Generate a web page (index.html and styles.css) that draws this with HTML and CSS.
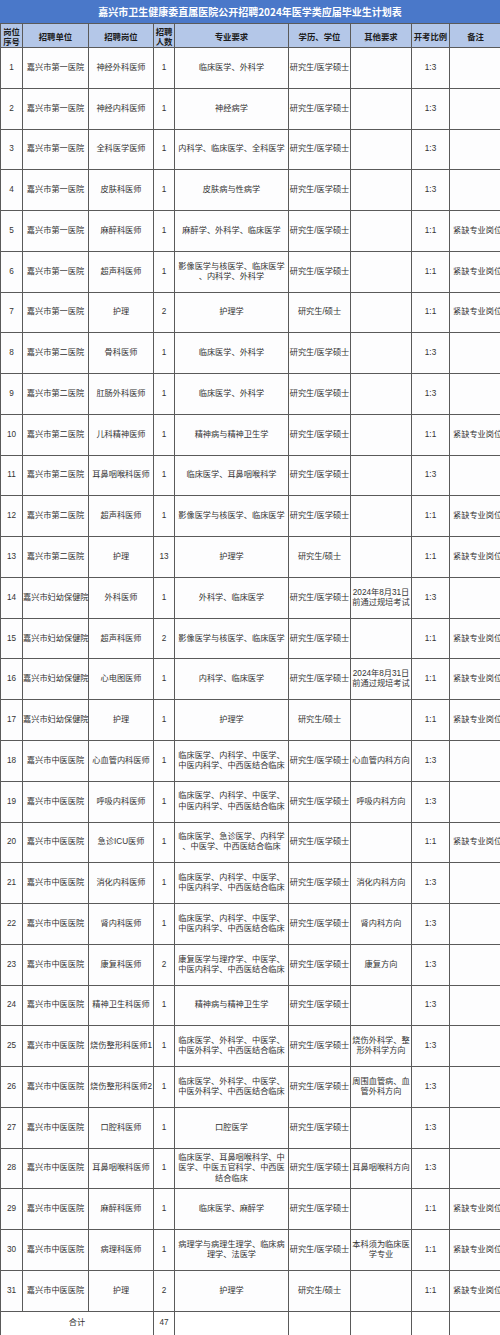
FILE: index.html
```html
<!DOCTYPE html>
<html lang="zh-CN">
<head>
<meta charset="utf-8">
<title>嘉兴市卫生健康委直属医院公开招聘2024年医学类应届毕业生计划表</title>
<link rel="stylesheet" href="styles.css">
</head>
<body>
<div class="sheet">
  <div class="title">嘉兴市卫生健康委直属医院公开招聘2024年医学类应届毕业生计划表</div>
  <table class="plan">
    <colgroup>
      <col class="c-no"><col class="c-unit"><col class="c-post"><col class="c-num"><col class="c-major"><col class="c-deg"><col class="c-other"><col class="c-ratio"><col class="c-note">
    </colgroup>
    <thead>
      <tr class="head">
        <th>岗位<br>序号</th><th>招聘单位</th><th>招聘岗位</th><th>招聘<br>人数</th><th>专业要求</th><th>学历、学位</th><th>其他要求</th><th>开考比例</th><th>备注</th>
      </tr>
    </thead>
    <tbody>
      <tr><td>1</td><td>嘉兴市第一医院</td><td>神经外科医师</td><td>1</td><td>临床医学、外科学</td><td>研究生/医学硕士</td><td></td><td>1:3</td><td class="note"></td></tr>
      <tr><td>2</td><td>嘉兴市第一医院</td><td>神经内科医师</td><td>1</td><td>神经病学</td><td>研究生/医学硕士</td><td></td><td>1:3</td><td class="note"></td></tr>
      <tr><td>3</td><td>嘉兴市第一医院</td><td>全科医学医师</td><td>1</td><td>内科学、临床医学、全科医学</td><td>研究生/医学硕士</td><td></td><td>1:3</td><td class="note"></td></tr>
      <tr><td>4</td><td>嘉兴市第一医院</td><td>皮肤科医师</td><td>1</td><td>皮肤病与性病学</td><td>研究生/医学硕士</td><td></td><td>1:3</td><td class="note"></td></tr>
      <tr><td>5</td><td>嘉兴市第一医院</td><td>麻醉科医师</td><td>1</td><td>麻醉学、外科学、临床医学</td><td>研究生/医学硕士</td><td></td><td>1:1</td><td class="note">紧缺专业岗位</td></tr>
      <tr><td>6</td><td>嘉兴市第一医院</td><td>超声科医师</td><td>1</td><td>影像医学与核医学、临床医学<br>、内科学、外科学</td><td>研究生/医学硕士</td><td></td><td>1:1</td><td class="note">紧缺专业岗位</td></tr>
      <tr><td>7</td><td>嘉兴市第一医院</td><td>护理</td><td>2</td><td>护理学</td><td>研究生/硕士</td><td></td><td>1:1</td><td class="note">紧缺专业岗位</td></tr>
      <tr><td>8</td><td>嘉兴市第二医院</td><td>骨科医师</td><td>1</td><td>临床医学、外科学</td><td>研究生/医学硕士</td><td></td><td>1:3</td><td class="note"></td></tr>
      <tr><td>9</td><td>嘉兴市第二医院</td><td>肛肠外科医师</td><td>1</td><td>临床医学、外科学</td><td>研究生/医学硕士</td><td></td><td>1:3</td><td class="note"></td></tr>
      <tr><td>10</td><td>嘉兴市第二医院</td><td>儿科精神医师</td><td>1</td><td>精神病与精神卫生学</td><td>研究生/医学硕士</td><td></td><td>1:1</td><td class="note">紧缺专业岗位</td></tr>
      <tr><td>11</td><td>嘉兴市第二医院</td><td>耳鼻咽喉科医师</td><td>1</td><td>临床医学、耳鼻咽喉科学</td><td>研究生/医学硕士</td><td></td><td>1:3</td><td class="note"></td></tr>
      <tr><td>12</td><td>嘉兴市第二医院</td><td>超声科医师</td><td>1</td><td>影像医学与核医学、临床医学</td><td>研究生/医学硕士</td><td></td><td>1:1</td><td class="note">紧缺专业岗位</td></tr>
      <tr><td>13</td><td>嘉兴市第二医院</td><td>护理</td><td>13</td><td>护理学</td><td>研究生/硕士</td><td></td><td>1:1</td><td class="note">紧缺专业岗位</td></tr>
      <tr><td>14</td><td>嘉兴市妇幼保健院</td><td>外科医师</td><td>1</td><td>外科学、临床医学</td><td>研究生/医学硕士</td><td>2024年8月31日<br>前通过规培考试</td><td>1:3</td><td class="note"></td></tr>
      <tr><td>15</td><td>嘉兴市妇幼保健院</td><td>超声科医师</td><td>2</td><td>影像医学与核医学、临床医学</td><td>研究生/医学硕士</td><td></td><td>1:1</td><td class="note">紧缺专业岗位</td></tr>
      <tr><td>16</td><td>嘉兴市妇幼保健院</td><td>心电图医师</td><td>1</td><td>内科学、临床医学</td><td>研究生/医学硕士</td><td>2024年8月31日<br>前通过规培考试</td><td>1:1</td><td class="note">紧缺专业岗位</td></tr>
      <tr><td>17</td><td>嘉兴市妇幼保健院</td><td>护理</td><td>1</td><td>护理学</td><td>研究生/硕士</td><td></td><td>1:1</td><td class="note">紧缺专业岗位</td></tr>
      <tr><td>18</td><td>嘉兴市中医医院</td><td>心血管内科医师</td><td>1</td><td>临床医学、内科学、中医学、<br>中医内科学、中西医结合临床</td><td>研究生/医学硕士</td><td>心血管内科方向</td><td>1:3</td><td class="note"></td></tr>
      <tr><td>19</td><td>嘉兴市中医医院</td><td>呼吸内科医师</td><td>1</td><td>临床医学、内科学、中医学、<br>中医内科学、中西医结合临床</td><td>研究生/医学硕士</td><td>呼吸内科方向</td><td>1:3</td><td class="note"></td></tr>
      <tr><td>20</td><td>嘉兴市中医医院</td><td>急诊ICU医师</td><td>1</td><td>临床医学、急诊医学、内科学<br>、中医学、中西医结合临床</td><td>研究生/医学硕士</td><td></td><td>1:1</td><td class="note">紧缺专业岗位</td></tr>
      <tr><td>21</td><td>嘉兴市中医医院</td><td>消化内科医师</td><td>1</td><td>临床医学、内科学、中医学、<br>中医内科学、中西医结合临床</td><td>研究生/医学硕士</td><td>消化内科方向</td><td>1:3</td><td class="note"></td></tr>
      <tr><td>22</td><td>嘉兴市中医医院</td><td>肾内科医师</td><td>1</td><td>临床医学、内科学、中医学、<br>中医内科学、中西医结合临床</td><td>研究生/医学硕士</td><td>肾内科方向</td><td>1:3</td><td class="note"></td></tr>
      <tr><td>23</td><td>嘉兴市中医医院</td><td>康复科医师</td><td>2</td><td>康复医学与理疗学、中医学、<br>中医内科学、中西医结合临床</td><td>研究生/医学硕士</td><td>康复方向</td><td>1:3</td><td class="note"></td></tr>
      <tr><td>24</td><td>嘉兴市中医医院</td><td>精神卫生科医师</td><td>1</td><td>精神病与精神卫生学</td><td>研究生/医学硕士</td><td></td><td>1:3</td><td class="note"></td></tr>
      <tr><td>25</td><td>嘉兴市中医医院</td><td>烧伤整形科医师1</td><td>1</td><td>临床医学、外科学、中医学、<br>中医外科学、中西医结合临床</td><td>研究生/医学硕士</td><td>烧伤外科学、整<br>形外科学方向</td><td>1:3</td><td class="note"></td></tr>
      <tr><td>26</td><td>嘉兴市中医医院</td><td>烧伤整形科医师2</td><td>1</td><td>临床医学、外科学、中医学、<br>中医外科学、中西医结合临床</td><td>研究生/医学硕士</td><td>周围血管病、血<br>管外科方向</td><td>1:3</td><td class="note"></td></tr>
      <tr><td>27</td><td>嘉兴市中医医院</td><td>口腔科医师</td><td>1</td><td>口腔医学</td><td>研究生/医学硕士</td><td></td><td>1:3</td><td class="note"></td></tr>
      <tr><td>28</td><td>嘉兴市中医医院</td><td>耳鼻咽喉科医师</td><td>1</td><td>临床医学、耳鼻咽喉科学、中<br>医学、中医五官科学、中西医<br>结合临床</td><td>研究生/医学硕士</td><td>耳鼻咽喉科方向</td><td>1:3</td><td class="note"></td></tr>
      <tr><td>29</td><td>嘉兴市中医医院</td><td>麻醉科医师</td><td>1</td><td>临床医学、麻醉学</td><td>研究生/医学硕士</td><td></td><td>1:1</td><td class="note">紧缺专业岗位</td></tr>
      <tr><td>30</td><td>嘉兴市中医医院</td><td>病理科医师</td><td>1</td><td>病理学与病理生理学、临床病<br>理学、法医学</td><td>研究生/医学硕士</td><td>本科须为临床医<br>学专业</td><td>1:1</td><td class="note">紧缺专业岗位</td></tr>
      <tr><td>31</td><td>嘉兴市中医医院</td><td>护理</td><td>2</td><td>护理学</td><td>研究生/硕士</td><td></td><td>1:1</td><td class="note">紧缺专业岗位</td></tr>
    </tbody>
    <tfoot>
      <tr class="total"><td colspan="3">合计</td><td>47</td><td></td><td></td><td></td><td></td><td class="note"></td></tr>
    </tfoot>
  </table>
</div>
</body>
</html>
```

FILE: styles.css
```css
html, body {
  margin: 0;
  padding: 0;
  background: #ffffff;
  overflow: hidden;
}

.sheet {
  width: 501px;
  font-family: "Liberation Sans", "Noto Sans CJK SC", sans-serif;
  color: #333333;
}

.title {
  height: 23px;
  line-height: 23px;
  width: 500px;
  background: #4a78c9;
  color: #ffffff;
  font-family: "Noto Sans CJK SC", sans-serif;
  font-weight: 700;
  font-size: 10px;
  text-align: center;
  white-space: nowrap;
}

.plan {
  width: 501px;
  table-layout: fixed;
  border-collapse: collapse;
  font-size: 8.2px;
  line-height: 10.2px;
}

.c-no { width: 22px; }
.c-unit { width: 66px; }
.c-post { width: 65px; }
.c-num { width: 21px; }
.c-major { width: 114px; }
.c-deg { width: 62px; }
.c-other { width: 61px; }
.c-ratio { width: 38px; }
.c-note { width: 52px; }

.plan th,
.plan td {
  border: 1px solid #5a5a5a;
  padding: 0;
  text-align: center;
  vertical-align: middle;
  white-space: nowrap;
  overflow: visible;
}

.head {
  height: 24px;
}

.head th {
  background: #b4c7e8;
  color: #1c1c1c;
  font-family: "Noto Sans CJK SC", sans-serif;
  font-weight: 700;
  font-size: 8.4px;
  line-height: 10px;
}

.plan tbody tr {
  height: 40.77px;
}

.plan tbody td {
  background: #fdfdfe;
}

.plan td.note {
  text-align: left;
  padding-left: 3px;
}

.total {
  height: 24px;
}
```
